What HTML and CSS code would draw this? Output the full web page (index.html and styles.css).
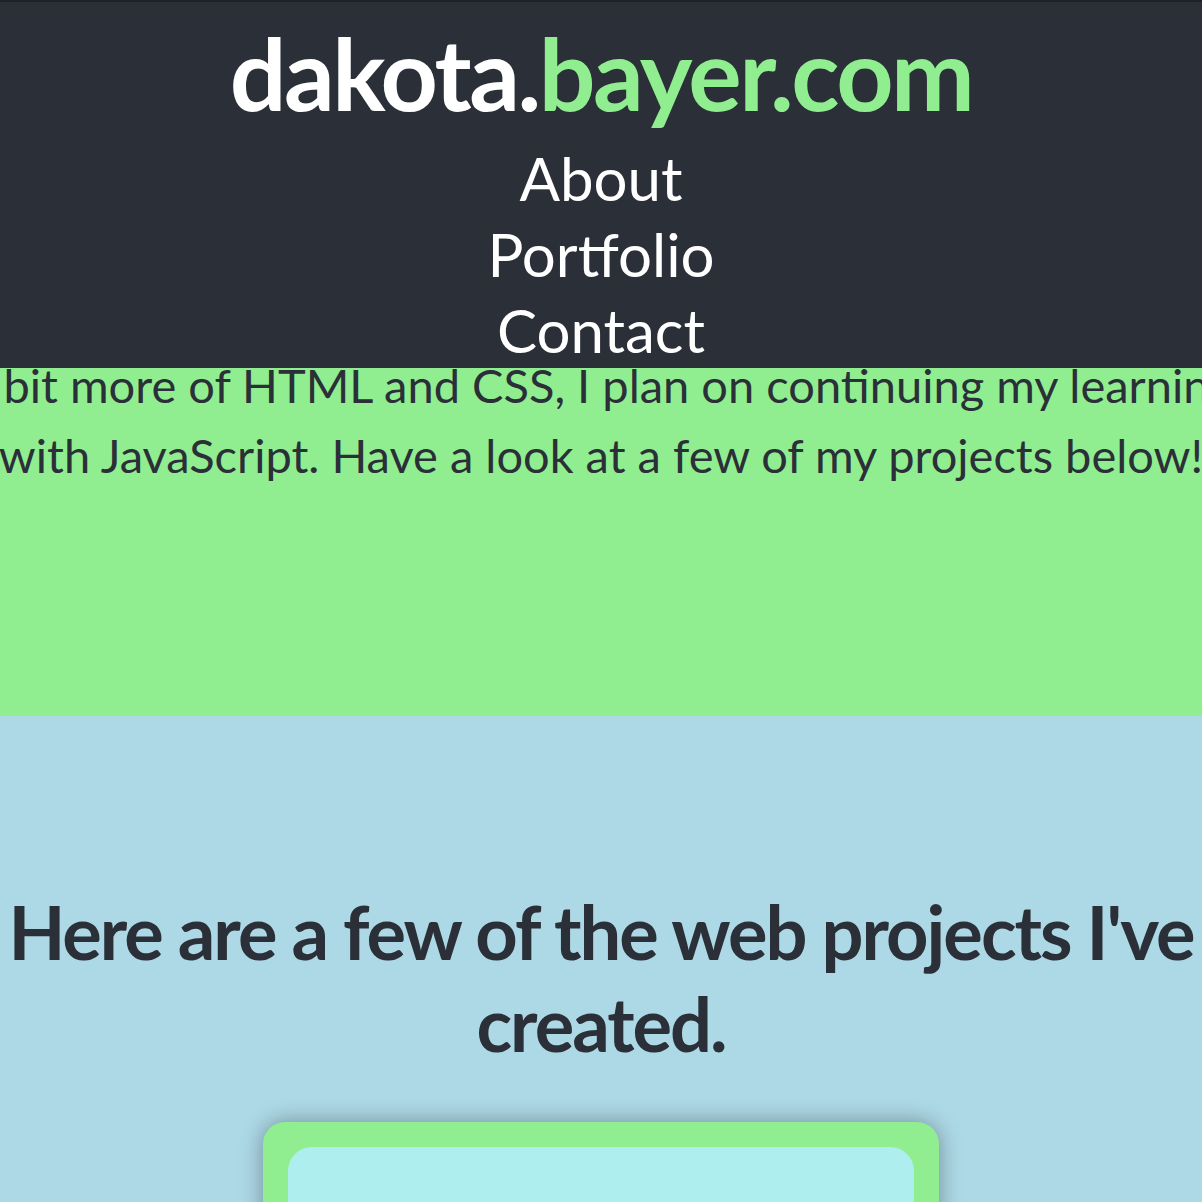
FILE: index.html
```html
<!DOCTYPE html>
<html lang="en">
<head>
<meta charset="utf-8">
<title>dakota.bayer.com</title>
<link rel="stylesheet" href="styles.css">
</head>
<body>
<header class="site-header">
  <h1 class="logo">dakota.<span class="logo-accent">bayer.com</span></h1>
  <nav class="nav">
    <a class="nav-link" href="#about">About</a>
    <a class="nav-link" href="#portfolio">Portfolio</a>
    <a class="nav-link" href="#contact">Contact</a>
  </nav>
</header>
<main>
  <section class="about" id="about">
    <p class="about-line about-line-1">a bit more of HTML and CSS, I plan on continuing my learning</p>
    <p class="about-line about-line-2">with JavaScript. Have a look at a few of my projects below!</p>
  </section>
  <section class="portfolio" id="portfolio">
    <h2 class="portfolio-title">Here are a few of the web projects I've<br>created.</h2>
    <div class="card">
      <div class="card-inner"></div>
    </div>
  </section>
</main>
</body>
</html>
```
FILE: styles.css
```css
* { box-sizing: border-box; }
html, body { margin: 0; padding: 0; }
body {
  font-family: Lato, "Open Sans", sans-serif;
  background: #add8e6;
  color: #2b3038;
  overflow: hidden;
  height: 1202px;
}
.site-header {
  background: #2b3038;
  border-top: 2px solid #1e2125;
  height: 368px;
  display: flex;
  flex-direction: column;
  align-items: center;
  overflow: hidden;
}
.logo {
  margin: 0;
  font-size: 100px;
  font-weight: 700;
  line-height: 1;
  letter-spacing: -2.5px;
  color: #ffffff;
  padding-top: 20px;
}
.logo-accent { color: #90ee90; }
.nav {
  display: flex;
  flex-direction: column;
  align-items: center;
  margin-top: 18px;
}
.nav-link {
  color: #ffffff;
  text-decoration: none;
  font-size: 60px;
  line-height: 76px;
}
.about {
  background: #90ee90;
  height: 348px;
  overflow: hidden;
  display: flex;
  flex-direction: column;
  align-items: center;
}
.about-line {
  margin: 0;
  white-space: nowrap;
  font-size: 47px;
  line-height: 70px;
}
.about-line-1 { margin-top: -18px; }
.portfolio {
  padding-top: 170px;
  display: flex;
  flex-direction: column;
  align-items: center;
}
.portfolio-title {
  margin: 0;
  font-size: 74px;
  font-weight: 700;
  line-height: 92px;
  text-align: center;
  letter-spacing: -2px;
  white-space: nowrap;
}
.card {
  margin-top: 52px;
  width: 676px;
  height: 300px;
  background: #90ee90;
  border-radius: 22px;
  padding: 25px;
  box-shadow: 0 0 22px rgba(0, 0, 0, 0.35);
}
.card-inner {
  background: #afeeee;
  height: 100%;
  border-radius: 24px 24px 0 0;
}
```
